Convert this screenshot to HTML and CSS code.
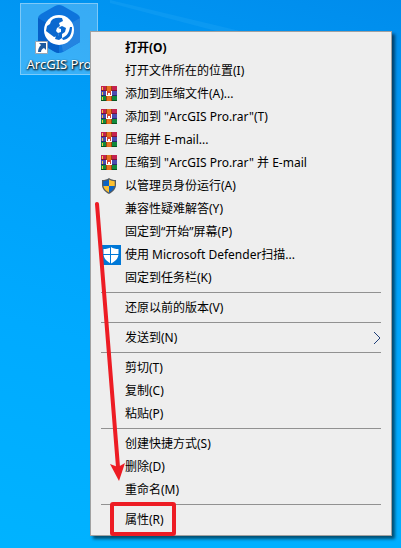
FILE: index.html
```html
<!DOCTYPE html>
<html lang="zh-CN">
<head>
    <meta charset="UTF-8">
    <meta name="viewport" content="width=device-width, initial-scale=1.0">
    <title>ArcGIS Pro</title>
    <link rel="stylesheet" href="styles.css">
</head>
<body>
    <!-- 图标定义 -->
    <svg class="defs" aria-hidden="true">
        <symbol id="rar" viewBox="0 0 16 15">
            <path fill="#c4224f" d="M0 0h16v5H0z"/>
            <path fill="#4a4bb0" d="M0 5h16v5H0z"/>
            <path fill="#118a3c" d="M0 10h16v5H0z"/>
            <path fill="#7d1238" d="M0 4h16v1H0z"/>
            <path fill="#29296e" d="M0 9h16v1H0z"/>
            <path fill="#07551f" d="M0 14h16v1H0z"/>
            <path fill="#f5c842" d="M1 1h1v3H1zM1 6h1v3H1zM1 11h1v3H1z"/>
            <path fill="#e8701e" d="M6 0h4v15H6z"/>
            <path fill="#a3400c" d="M5 0h1v15H5zM10 0h1v15h-1z"/>
            <path fill="#d8402c" d="M5 5h6v5H5z"/>
            <path fill="#fff" d="M5 5h1v4h1V7h2v2h1V5h1v5H5z"/>
        </symbol>
        <symbol id="uac" viewBox="0 0 16 16">
            <path fill="#555b60" d="M8 0C6 1.500 4 2 1 2v5c0 4 3 7 7 9 4-2 7-5 7-9V2C12 2 10 1.500 8 0z"/>
            <path fill="#0b63c4" d="M8 1.500C6 2.700 4.500 3 2.300 3.200V8H8z"/>
            <path fill="#fdc02f" d="M8 1.500c2 1.200 3.500 1.500 5.700 1.700V8H8z"/>
            <path fill="#fdc02f" d="M2.400 8H8v6.600C5 13 2.800 11 2.400 8z"/>
            <path fill="#0b63c4" d="M13.600 8H8v6.600c3-1.600 5.200-3.600 5.600-6.600z"/>
        </symbol>
        <symbol id="defender" viewBox="0 0 20 20">
            <path fill="#0078d7" d="M0 0h20v20H0z"/>
            <path fill="#fff" d="M10 2C8 3.500 5.500 4 2.500 4v5c0 4.500 3.500 7.500 7.500 9.500 4-2 7.500-5 7.500-9.500V4C14.500 4 12 3.500 10 2z"/>
            <path stroke="#0078d7" d="M9.500 2v17M2 9.500h16"/>
        </symbol>
    </svg>

    <main class="desktop">
        <svg class="glow" viewBox="0 0 401 60" preserveAspectRatio="none" aria-hidden="true">
            <path d="M110 0L240 31L401 82V88L220 32L110 3z"/>
        </svg>

        <div class="shortcut">
            <svg class="shortcut-icon" viewBox="0 0 48 50" aria-hidden="true">
                <path fill="#0d74dc" d="M24 1q2 0 4 1l14 8q3 2 3 4v24l-17 10q-4 2-8 0L3 38V14q0-2 3-4l14-8q2-1 4-1z"/>
                <path fill="#0660c8" d="M24 49q-2 0-4-1L3 38V14l21 12z"/>
                <path fill="#2484e0" d="M45 14v24L28 48l-4-22z"/>
                <circle cx="24" cy="26" r="15" fill="#fff"/>
                <path fill="#0a68cf" d="M18 15q4-2 9-1l1 3-4 2 1 3-3 2-1 3 3 3-1 2-4 1-4-3-4-3 1-5 3-2 1-3z"/>
                <path fill="#0a68cf" d="M23 24l4-2 4 2-1 4-3 2 0 4-3 2-4-1 1-3 3-1-1-2 3-1 0-3z"/>
                <path fill="#0a68cf" d="M35 23h2c0 8-3 12-9 13l-1-2c5-2 7-5 8-11z"/>
                <path fill="#fff" stroke="#9aa5b0" d="M.500 37.500h12v12h-12z"/>
                <path fill="#1c5a9e" d="M4 39h7v7l-2-2c-2 1-3 2-3 4H3c0-3 1-5 3-7z"/>
            </svg>
            <span class="shortcut-name">ArcGIS Pro</span>
        </div>

        <div class="menu">
            <button class="item default"><span class="icon"></span>打开(O)</button>
            <button class="item"><span class="icon"></span>打开文件所在的位置(I)</button>
            <button class="item"><span class="icon"><svg class="rar"><use href="#rar"/></svg></span>添加到压缩文件(A)...</button>
            <button class="item"><span class="icon"><svg class="rar"><use href="#rar"/></svg></span>添加到 "ArcGIS Pro.rar"(T)</button>
            <button class="item"><span class="icon"><svg class="rar"><use href="#rar"/></svg></span>压缩并 E-mail...</button>
            <button class="item"><span class="icon"><svg class="rar"><use href="#rar"/></svg></span>压缩到 "ArcGIS Pro.rar" 并 E-mail</button>
            <button class="item"><span class="icon"><svg class="uac"><use href="#uac"/></svg></span>以管理员身份运行(A)</button>
            <button class="item"><span class="icon"></span>兼容性疑难解答(Y)</button>
            <button class="item"><span class="icon"></span>固定到“开始”屏幕(P)</button>
            <button class="item"><span class="icon"><svg class="defender"><use href="#defender"/></svg></span>使用 Microsoft Defender扫描...</button>
            <button class="item"><span class="icon"></span>固定到任务栏(K)</button>
            <hr>
            <button class="item"><span class="icon"></span>还原以前的版本(V)</button>
            <hr>
            <button class="item"><span class="icon"></span>发送到(N)<svg class="more" viewBox="0 0 8 14" aria-hidden="true"><path d="M1 1l6 6-6 6"/></svg></button>
            <hr>
            <button class="item"><span class="icon"></span>剪切(T)</button>
            <button class="item"><span class="icon"></span>复制(C)</button>
            <button class="item"><span class="icon"></span>粘贴(P)</button>
            <hr>
            <button class="item"><span class="icon"></span>创建快捷方式(S)</button>
            <button class="item"><span class="icon"></span>删除(D)</button>
            <button class="item"><span class="icon"></span>重命名(M)</button>
            <hr>
            <button class="item"><span class="icon"></span>属性(R)</button>

            <!-- 红色标注 -->
            <svg class="mark" viewBox="0 0 90 505" aria-hidden="true">
                <path class="line" d="M6 173L27 436"/>
                <path class="head" d="M19 433l8 3 7-4-6 18z"/>
                <rect class="box" x="21" y="473" width="62" height="30" rx="1"/>
            </svg>
        </div>
    </main>
</body>
</html>
```
FILE: styles.css
```css
* {
    box-sizing: border-box;
}
body {
    margin: 0;
    font-family: "Noto Sans", "Noto Sans CJK SC", sans-serif;
    font-size: 12px;
}
.defs {
    position: absolute;
    width: 0;
    height: 0;
}
.desktop {
    position: relative;
    min-height: 100vh;
    padding: 3px 20px;
    overflow: hidden;
    background: linear-gradient(195deg, #008cec 0%, #009ef8 30%, #00aaff 65%, #00b3ff 100%);
}
.glow {
    position: absolute;
    top: 0;
    left: 0;
    width: 100%;
    height: 60px;
    fill: rgba(90, 200, 255, 0.12);
}

/* 桌面快捷方式 */
.shortcut {
    display: flex;
    flex-direction: column;
    align-items: center;
    width: 78px;
    height: 72px;
    border: 1px solid rgba(255, 255, 255, 0.35);
    background: rgba(255, 255, 255, 0.22);
}
.shortcut-icon {
    width: 48px;
    height: 50px;
}
.shortcut-name {
    color: #fff;
    font-size: 13px;
    line-height: 20px;
    white-space: nowrap;
    text-shadow: 1px 1px 2px #000, 0 1px 2px rgba(0, 0, 0, 0.8);
}

/* 右键菜单 */
.menu {
    position: absolute;
    top: 31px;
    left: 90px;
    right: 9px;
    padding: 4px 0;
    border: 1px solid #a0a0a0;
    background: #eee;
    box-shadow: 3px 3px 3px rgba(0, 0, 0, 0.55);
}
.item {
    display: flex;
    align-items: center;
    width: 100%;
    height: 23px;
    padding: 0 10px;
    border: none;
    background: none;
    color: #000;
    font: inherit;
    line-height: 23px;
    text-align: left;
    white-space: pre;
}
.item:hover {
    background: #fff;
}
.default {
    font-weight: bold;
}
.icon {
    display: flex;
    align-items: center;
    width: 24px;
    height: 20px;
}
.rar {
    width: 16px;
    height: 15px;
}
.uac {
    width: 16px;
    height: 16px;
}
.defender {
    width: 20px;
    height: 20px;
}
.more {
    width: 8px;
    height: 14px;
    margin-left: auto;
    fill: none;
    stroke: #1f3f78;
}
hr {
    height: 1px;
    margin: 3px 10px;
    border: none;
    background: #919191;
}

/* 标注 */
.mark {
    position: absolute;
    top: -1px;
    left: 0;
    width: 90px;
    height: 505px;
    pointer-events: none;
}
.line {
    stroke: #ed1c24;
    stroke-width: 4;
    stroke-linecap: round;
}
.head {
    fill: #ed1c24;
}
.box {
    fill: none;
    stroke: #ed1c24;
    stroke-width: 4;
}
```
